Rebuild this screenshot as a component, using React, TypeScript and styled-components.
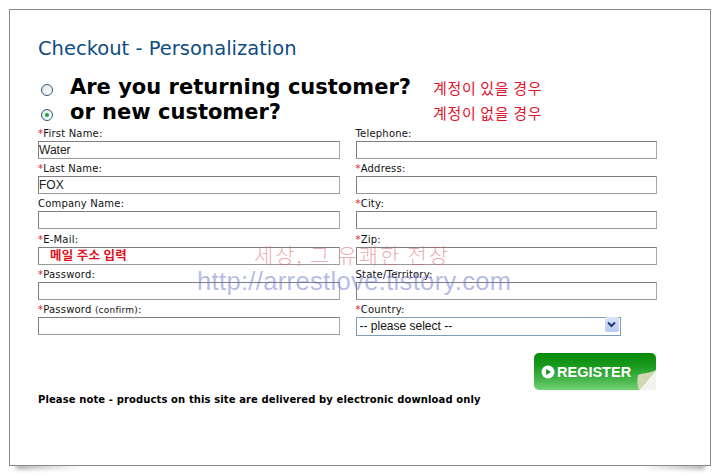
import React from 'react';
import styled, { createGlobalStyle } from 'styled-components';

const GlobalStyle = createGlobalStyle`
  html {
    background: #fff;
  }
  body {
    margin: 0;
    padding: 0;
    font-family: "DejaVu Sans", Verdana, sans-serif;
  }
`;

const Page = styled.div`
  width: 720px;
  height: 475px;
  padding: 9px 9px 0;
  box-sizing: border-box;
  overflow: hidden;
`;

const Frame = styled.div`
  position: relative;
  width: 702px;
  height: 457px;
  box-sizing: border-box;
  padding: 26px 28px 0;
  border: 1px solid #8a8a8a;
  background: #fff;

  &::before,
  &::after {
    content: "";
    position: absolute;
    z-index: -1;
    bottom: -4px;
    width: 66px;
    height: 5px;
    filter: blur(2px);
  }
  &::before {
    left: 6px;
    background: linear-gradient(to right, #a0a0a0, rgba(200, 200, 200, 0));
  }
  &::after {
    right: 5px;
    background: linear-gradient(to left, #a0a0a0, rgba(200, 200, 200, 0));
  }
`;

const Title = styled.h1`
  margin: 0;
  height: 25px;
  font-size: 19.5px;
  line-height: 26px;
  font-weight: 400;
  color: #0f4c81;
`;

const ChoiceList = styled.div`
  display: flex;
  flex-direction: column;
  margin-top: 14px;
`;

const Choice = styled.div`
  display: flex;
  align-items: center;
  height: 25px;
`;

const Radio = styled.span<{ $on?: boolean }>`
  flex: none;
  position: relative;
  width: 12px;
  height: 12px;
  margin: 4px 17px 0 3px;
  box-sizing: border-box;
  border: 1px solid #2f5878;
  border-radius: 50%;
  background: linear-gradient(135deg, #dfe3e6, #fff);

  ${(p) => p.$on && `
    &::after {
      content: "";
      position: absolute;
      left: 3px;
      top: 3px;
      width: 4px;
      height: 4px;
      border-radius: 50%;
      background: #22a24a;
    }
  `}
`;

const ChoiceText = styled.span`
  width: 363px;
  flex: none;
  font-size: 21px;
  line-height: 25px;
  font-weight: 700;
  color: #000;
  white-space: nowrap;
`;

const Note = styled.span`
  font-family: "Noto Sans CJK KR", sans-serif;
  font-size: 15px;
  line-height: 20px;
  color: #e0142c;
  letter-spacing: 0.65px;
`;

const Grid = styled.div`
  display: grid;
  grid-template-columns: 302px 302px;
  column-gap: 15.5px;
  row-gap: 0.2px;
  margin-top: -1px;
`;

const Field = styled.div`
  display: flex;
  flex-direction: column;
`;

const Label = styled.label`
  height: 17px;
  font-size: 10px;
  line-height: 20px;
  letter-spacing: 0.2px;
  color: #111;
  white-space: nowrap;
`;

const Req = styled.span`
  color: #e0142c;
`;

const Small = styled.span`
  font-size: 9px;
`;

const Input = styled.input<{ $hint?: boolean }>`
  width: 301.5px;
  height: 18px;
  box-sizing: border-box;
  margin: 0;
  padding: ${(p) => (p.$hint ? '0 0 3px 11px' : '0')};
  border: 1px solid #7f7f7f;
  border-bottom-color: #9a9a9a;
  border-right-color: #a8a8a8;
  outline: none;
  background: #fff;
  font-family: ${(p) => (p.$hint ? '"Noto Sans CJK KR", sans-serif' : '"Liberation Sans", Arial, sans-serif')};
  font-size: ${(p) => (p.$hint ? '12.5px' : '12px')};
  letter-spacing: ${(p) => (p.$hint ? '0.3px' : '0')};
  font-weight: ${(p) => (p.$hint ? 700 : 400)};
  color: ${(p) => (p.$hint ? '#e0101e' : '#222')};
`;

const SelectBox = styled.div`
  position: relative;
  width: 265px;
  height: 19px;
  margin-top: -2px;
`;

const Select = styled.select`
  appearance: none;
  width: 100%;
  height: 100%;
  margin: 0;
  padding: 0 0 1px 3px;
  box-sizing: border-box;
  border: 1px solid #7f9db9;
  border-radius: 0;
  background: #fff;
  font-family: "Liberation Sans", Arial, sans-serif;
  font-size: 12px;
  color: #111;
`;

const SelectArrow = styled.span`
  position: absolute;
  top: 2px;
  right: 2px;
  width: 14px;
  height: 15px;
  display: flex;
  align-items: center;
  justify-content: center;
  border-radius: 2px;
  background: linear-gradient(#dbe6fb, #b5c9f3);
  pointer-events: none;
`;

const Footer = styled.div`
  display: flex;
  justify-content: space-between;
  align-items: flex-start;
  margin-top: 18px;
`;

const Notice = styled.p`
  margin: 40px 0 0;
  font-size: 10px;
  line-height: 14px;
  font-weight: 700;
  letter-spacing: 0.11px;
  color: #000;
`;

const Register = styled.button`
  position: relative;
  display: flex;
  align-items: center;
  gap: 2px;
  width: 122px;
  height: 37px;
  margin: 0 26px 0 0;
  padding: 2px 0 0 7px;
  box-sizing: border-box;
  border: none;
  border-radius: 5px 5px 0 5px;
  background: linear-gradient(#058a05 0%, #1a9a1f 35%, #4bb84f 75%, #74d277 100%);
  font-family: "Liberation Sans", Arial, sans-serif;
  font-size: 14.5px;
  font-weight: 700;
  color: #fff;
`;

const Curl = styled.svg`
  position: absolute;
  right: 0;
  bottom: 0;
`;

const Watermark = styled.div<{ $link?: boolean }>`
  position: absolute;
  white-space: nowrap;
  pointer-events: none;
  left: ${(p) => (p.$link ? '187px' : '244px')};
  top: ${(p) => (p.$link ? '257px' : '230px')};
  font-family: ${(p) => (p.$link ? '"Liberation Sans", Arial, sans-serif' : '"Noto Sans CJK KR", sans-serif')};
  font-size: ${(p) => (p.$link ? '25.5px' : '21px')};
  line-height: 28px;
  font-weight: ${(p) => (p.$link ? 400 : 300)};
  letter-spacing: ${(p) => (p.$link ? '0.35px' : '1.85px')};
  color: ${(p) => (p.$link ? 'rgba(110, 120, 205, 0.5)' : 'rgba(215, 90, 95, 0.5)')};
`;

type FieldDef = { label: string; required?: boolean; value?: string; hint?: boolean };

const fields: FieldDef[] = [
  { label: 'First Name:', required: true, value: 'Water' },
  { label: 'Telephone:' },
  { label: 'Last Name:', required: true, value: 'FOX' },
  { label: 'Address:', required: true },
  { label: 'Company Name:' },
  { label: 'City:', required: true },
  { label: 'E-Mail:', required: true, value: '메일 주소 입력', hint: true },
  { label: 'Zip:', required: true },
  { label: 'Password:', required: true },
  { label: 'State/Territory:' },
];

const App: React.FC = () => {
  return (
    <Page>
      <GlobalStyle />
      <Frame>
        <Title>Checkout - Personalization</Title>
        <ChoiceList>
          <Choice>
            <Radio />
            <ChoiceText>Are you returning customer?</ChoiceText>
            <Note>계정이 있을 경우</Note>
          </Choice>
          <Choice>
            <Radio $on />
            <ChoiceText>or new customer?</ChoiceText>
            <Note>계정이 없을 경우</Note>
          </Choice>
        </ChoiceList>
        <Grid>
          {fields.map((f) => (
            <Field key={f.label}>
              <Label>
                {f.required && <Req>*</Req>}
                {f.label}
              </Label>
              <Input $hint={f.hint} defaultValue={f.value} readOnly />
            </Field>
          ))}
          <Field>
            <Label>
              <Req>*</Req>Password <Small>(confirm)</Small>:
            </Label>
            <Input readOnly />
          </Field>
          <Field>
            <Label>
              <Req>*</Req>Country:
            </Label>
            <SelectBox>
              <Select defaultValue="">
                <option value="">-- please select --</option>
              </Select>
              <SelectArrow>
                <svg width="9" height="7" viewBox="0 0 9 7">
                  <path d="M1 1.5 L4.5 5 L8 1.5" fill="none" stroke="#1f3a6e" strokeWidth="2" />
                </svg>
              </SelectArrow>
            </SelectBox>
          </Field>
        </Grid>
        <Footer>
          <Notice>Please note - products on this site are delivered by electronic download only</Notice>
          <Register type="button">
            <svg width="14" height="14" viewBox="0 0 14 14">
              <circle cx="7" cy="7" r="6.5" fill="#fff" />
              <path d="M5.2 4 L10 7 L5.2 10 Z" fill="#1c8f22" />
            </svg>
            REGISTER
            <Curl width="20" height="20" viewBox="0 0 20 20">
              <path d="M20 0 L20 20 L3 20 Z" fill="#f3f3ec" />
              <path d="M20 0 C12 4 5 3 2 5 C1 10 1 15 3 20 Z" fill="#d3d8b4" />
            </Curl>
          </Register>
        </Footer>
        <Watermark>세상, 그 유쾌한 전장</Watermark>
        <Watermark $link>http://arrestlove.tistory.com</Watermark>
      </Frame>
    </Page>
  );
};

export default App;
